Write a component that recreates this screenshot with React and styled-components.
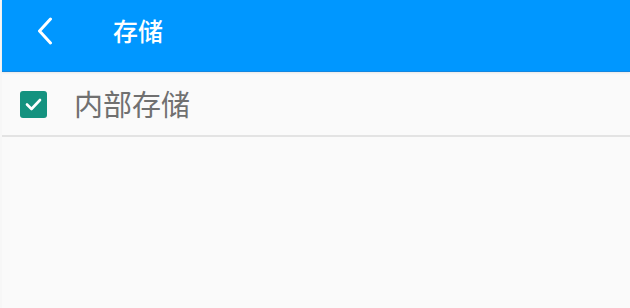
import styled, { createGlobalStyle } from "styled-components";

const GlobalStyle = createGlobalStyle`
    html, body {
        margin: 0;
        padding: 0;
        background: #f7f7f7;
        font-family: "Noto Sans CJK SC", "Noto Sans", sans-serif;
    }
`

function BackIcon() {
    return (
        <svg width="18" height="28" viewBox="0 0 18 28">
            <path d="M14.5 2 L3.5 14 L14.5 26" fill="none" stroke="#fff" strokeWidth="3" strokeLinecap="round" strokeLinejoin="round" />
        </svg>
    )
}

function CheckBox({ checked }) {
    return (
        <Box checked={checked}>
            {checked && (
                <svg width="19" height="15" viewBox="0 0 19 15">
                    <path d="M3 7.5 L7.5 12 L16 3" fill="none" stroke="#fff" strokeWidth="2.6" strokeLinecap="round" strokeLinejoin="round" />
                </svg>
            )}
        </Box>
    )
}

export default function App() {
    const items = [{ name: '内部存储', checked: true }];

    return (
        <>
            <GlobalStyle />
            <Screen>
                <Toolbar>
                    <BackButton><BackIcon /></BackButton>
                    <Title>存储</Title>
                </Toolbar>
                <List>
                    {items.map((item, index) =>
                        <Row key={index}>
                            <CheckBox checked={item.checked} />
                            <Label>{item.name}</Label>
                        </Row>
                    )}
                </List>
            </Screen>
        </>
    )
}

const Screen = styled.div`
    margin-left: 2px;
    height: 308px;
    background: #fafafa;
    display: flex;
    flex-direction: column;
`
const Toolbar = styled.div`
    height: 72px;
    background: #0097ff;
    border-bottom: 1px solid #1487e0;
    box-shadow: 0 1px 2px rgba(0, 0, 0, 0.08);
    display: flex;
    align-items: center;
    padding-bottom: 10px;
    box-sizing: border-box;
`
const BackButton = styled.div`
    width: 18px;
    height: 28px;
    margin-left: 34px;
    display: flex;
`
const Title = styled.h1`
    margin: 0 0 0 59px;
    font-size: 25px;
    font-weight: 500;
    color: #ffffff;
    line-height: 1;
`
const List = styled.div`
    display: flex;
    flex-direction: column;
`
const Row = styled.div`
    height: 63px;
    display: flex;
    align-items: center;
    border-bottom: 2px solid #e3e3e3;
    padding-left: 18px;
`
const Box = styled.div`
    width: 27px;
    height: 27px;
    border-radius: 3px;
    background: ${props => props.checked ? '#14927f' : 'transparent'};
    border: ${props => props.checked ? 'none' : '2px solid #757575'};
    display: flex;
    align-items: center;
    justify-content: center;
    margin-top: 1px;
`
const Label = styled.span`
    margin-left: 27px;
    font-size: 29px;
    font-weight: 400;
    color: #707070;
    line-height: 1;
`
